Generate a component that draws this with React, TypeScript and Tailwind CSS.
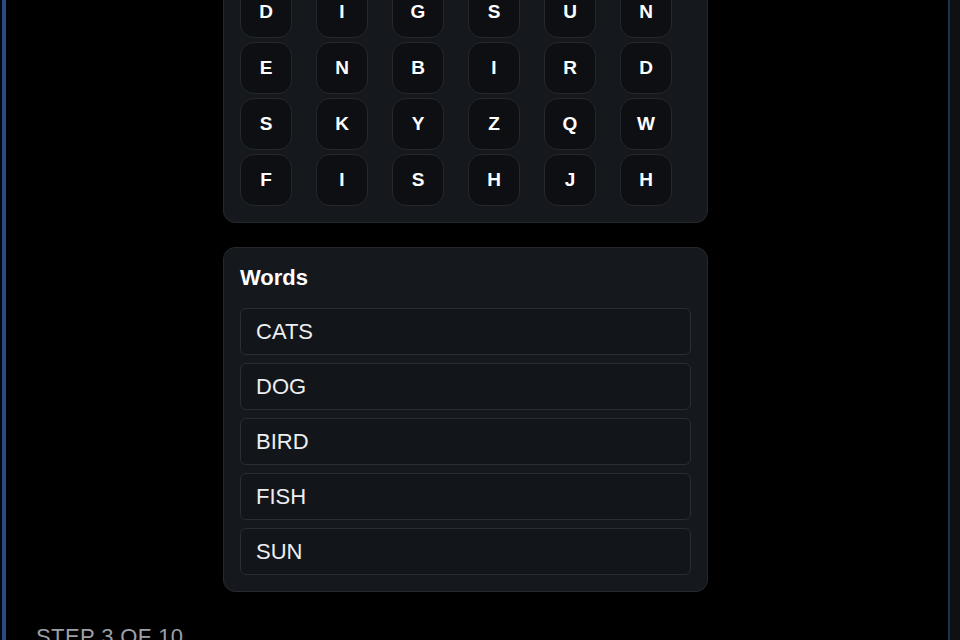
const grid = [
  ["C", "A", "T", "S", "L", "V"],
  ["O", "M", "P", "X", "D", "O"],
  ["D", "I", "G", "S", "U", "N"],
  ["E", "N", "B", "I", "R", "D"],
  ["S", "K", "Y", "Z", "Q", "W"],
  ["F", "I", "S", "H", "J", "H"],
];

const words = ["CATS", "DOG", "BIRD", "FISH", "SUN"];

export default function App() {
  return (
    <div
      className="flex h-screen w-full overflow-hidden bg-black text-[#f3f4f6]"
      style={{ fontFamily: '"Liberation Sans", Arial, sans-serif' }}
    >
      <div className="w-[2px] shrink-0 bg-[#05070c]" />
      <div className="w-[4px] shrink-0 bg-[#2b4a84]" />

      <main className="flex-1 px-[30px]">
        <div className="mt-[-143px] ml-[187px] flex w-[485px] flex-col gap-6">
          {/* letter board */}
          <section className="rounded-xl border border-[#25282e] bg-[#15181d] p-4">
            <div className="grid grid-cols-[repeat(6,52px)] gap-x-6 gap-y-1">
              {grid.flat().map((ch, i) => (
                <div
                  key={i}
                  className="flex h-[52px] w-[52px] items-center justify-center rounded-[14px] border border-[#24272d] bg-[#0d0f13] text-[19px] font-bold text-white"
                >
                  {ch}
                </div>
              ))}
            </div>
          </section>

          {/* word list */}
          <section className="rounded-xl border border-[#25282e] bg-[#15181d] p-4">
            <h2 className="mb-4 text-[22px] leading-[28px] font-bold text-white">Words</h2>
            <ul className="flex flex-col gap-2">
              {words.map((w) => (
                <li
                  key={w}
                  className="flex h-[47px] items-center rounded-md border border-[#2a2d33] bg-[#121519] px-[15px] text-[22px] text-[#eceef1]"
                >
                  {w}
                </li>
              ))}
            </ul>
          </section>
        </div>

        <p className="mt-[31px] text-[22px] leading-[28px] tracking-[0.4px] text-[#9ca0a8]">
          STEP 3 OF 10
        </p>
      </main>

      <div className="w-[2px] shrink-0 bg-[#1d304c]" />
      <div className="w-[10px] shrink-0 bg-[#0e1014]" />
    </div>
  );
}
